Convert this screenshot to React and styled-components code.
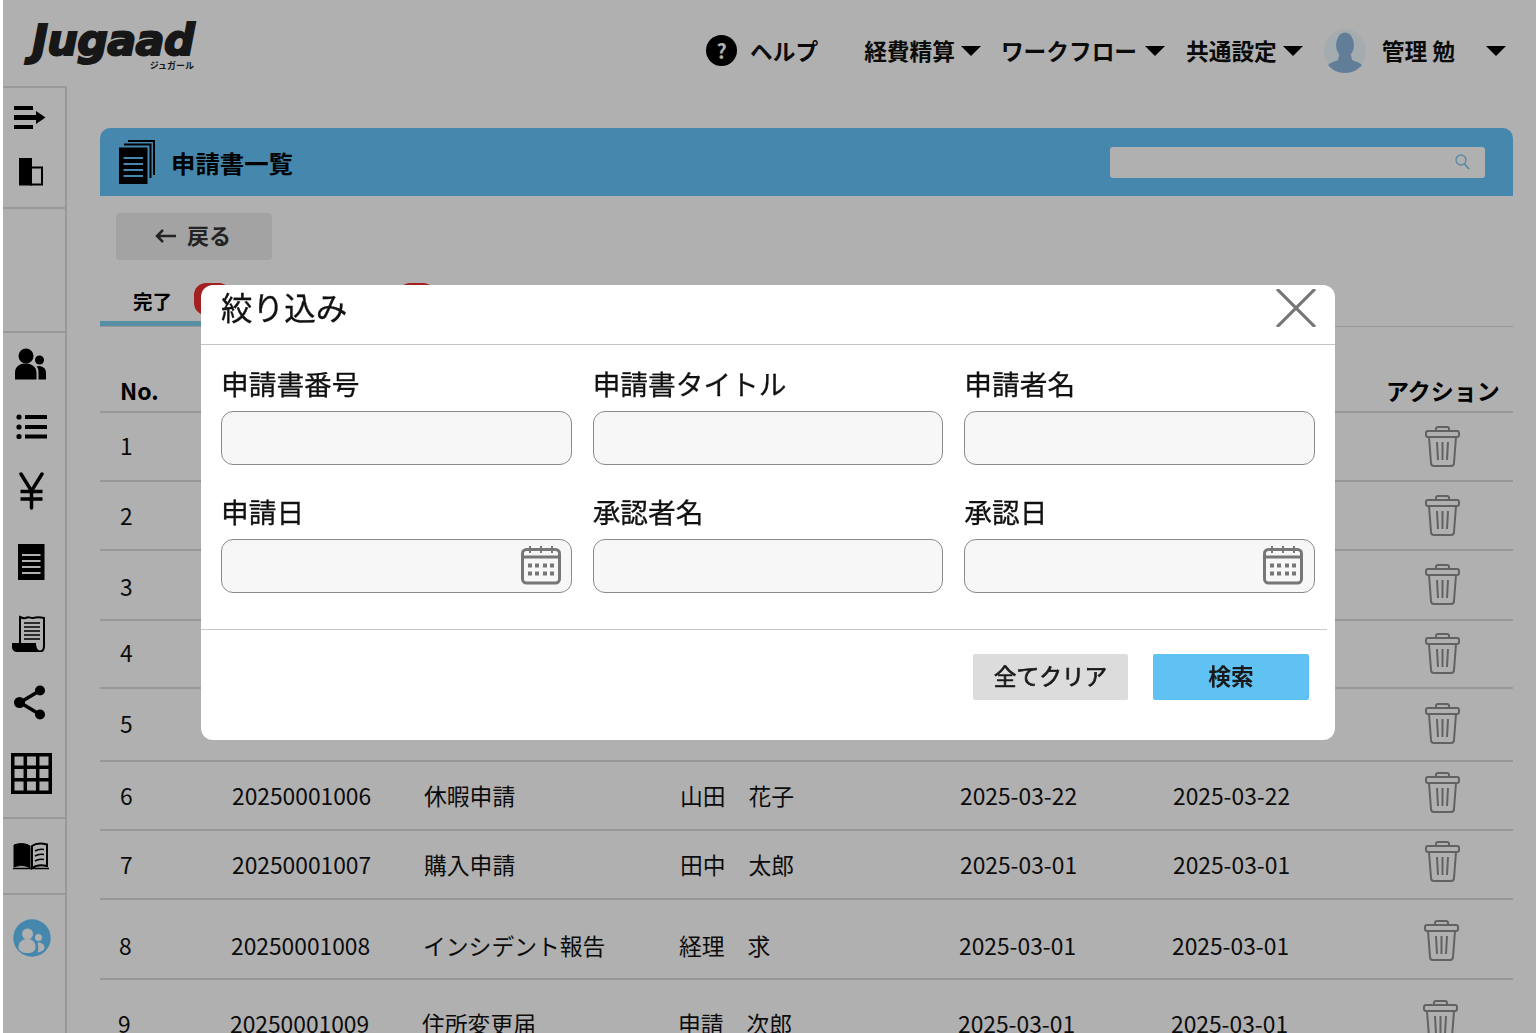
import React from 'react'
import styled, { createGlobalStyle } from 'styled-components'

const GlobalStyle = createGlobalStyle`
  html, body {
    margin: 0;
    padding: 0;
    background: #fff;
    font-family: "Noto Sans CJK JP", "Noto Sans", sans-serif;
    color: #000;
  }
  * { box-sizing: border-box; }
`

const Page = styled.div`
  height: 1033px;
  overflow: hidden;
  padding-left: 3px;
`
const TopBar = styled.header`
  height: 86px;
  display: flex;
  align-items: center;
  padding: 15px 30px 0 18px;
`
const Logo = styled.div`
  display: flex;
  flex-direction: column;
  align-items: flex-end;
  width: 173px;
  margin-top: -11px;
`
const LogoWord = styled.span`
  font-family: "DejaVu Sans", sans-serif;
  font-weight: 700;
  font-style: italic;
  font-size: 43px;
  line-height: 42px;
  letter-spacing: -0.7px;
  color: #222;
  -webkit-text-stroke: 2px #222;
  white-space: nowrap;
`
const LogoSub = styled.span`
  font-size: 9px;
  line-height: 10px;
  font-weight: 700;
  color: #222;
`
const Nav = styled.nav`
  margin-left: auto;
  display: flex;
  align-items: center;
  font-size: 22.7px;
  font-weight: 700;
  color: #111;
`
const NavItem = styled.div`
  display: flex;
  align-items: center;
  gap: ${p => p.$gap || 6}px;
  margin-right: ${p => p.$after || 0}px;
  white-space: nowrap;
`
const HelpDot = styled.span`
  width: 31px;
  height: 31px;
  border-radius: 50%;
  background: #000;
  color: #fff;
  display: flex;
  align-items: center;
  justify-content: center;
  font-size: 20px;
  font-weight: 700;
`
const Caret = styled.span`
  width: 0;
  height: 0;
  border-left: 10px solid transparent;
  border-right: 10px solid transparent;
  border-top: 10px solid #000;
`

const Body = styled.div`
  display: flex;
  height: 947px;
`
const Sidebar = styled.aside`
  width: 64px;
  flex: none;
  border-top: 2px solid #dedede;
  border-right: 2px solid #dcdcdc;
  display: flex;
  flex-direction: column;
`
const SideSection = styled.div`
  height: ${p => p.$h ? p.$h + 'px' : 'auto'};
  border-bottom: ${p => p.$last ? 'none' : '2px solid #dedede'};
  display: flex;
  flex-direction: column;
  align-items: center;
  padding-right: 6px;
`
const SideItem = styled.div`
  height: ${p => p.$h}px;
  width: 100%;
  display: flex;
  align-items: center;
  justify-content: center;
  padding-left: ${p => Math.max(p.$nudge || 0, 0) * 2}px;
  padding-right: ${p => Math.max(-(p.$nudge || 0), 0) * 2}px;
`

const Main = styled.main`
  flex: 1;
  padding: 42px 23px 0 33px;
  min-width: 0;
`
const CardHead = styled.div`
  height: 68px;
  background: #66c6fb;
  border-radius: 10px 10px 0 0;
  display: flex;
  align-items: center;
  padding: 0 28px 0 19px;
`
const CardTitle = styled.h1`
  margin: 2px 0 0 16px;
  font-size: 24.4px;
  font-weight: 700;
  line-height: 1;
`
const SearchBox = styled.div`
  margin-left: auto;
  width: 375px;
  height: 31px;
  background: #fff;
  border-radius: 3px;
  display: flex;
  align-items: center;
  justify-content: flex-end;
  padding-right: 15px;
`
const BackButton = styled.button`
  display: flex;
  align-items: center;
  justify-content: center;
  gap: 11px;
  width: 156px;
  height: 47px;
  margin: 17px 0 0 16px;
  padding: 0 0 5px;
  background: #ececec;
  border: 0;
  border-radius: 4px;
  font: 700 22px "Noto Sans CJK JP", sans-serif;
  color: #333;
`
const BackArrowSvg = styled.svg`
  margin: 4px 0 0 -2px;
`
const Tabs = styled.div`
  height: 67px;
  display: flex;
  align-items: stretch;
  border-bottom: 1px solid #dcdcdc;
`
const Tab = styled.div`
  width: ${p => p.$w}px;
  position: relative;
  padding: 16px 0 0 33px;
  font-size: 19.5px;
  font-weight: 700;
  line-height: 50px;
  border-bottom: ${p => p.$active ? '5px solid #7fd0ee' : '0'};
`
const Badge = styled.span`
  position: absolute;
  top: 23px;
  left: ${p => p.$left}px;
  width: 37px;
  height: 32px;
  border-radius: 12px;
  background: #ee2e2e;
`

const TableHead = styled.div`
  height: 86px;
  display: grid;
  grid-template-columns: 112px 192px 256px 280px 213px 213px 1fr;
  padding-left: 20px;
  align-items: end;
  padding-bottom: 4px;
  font-size: 23px;
  font-weight: 700;
  border-bottom: 2px solid #dcdcdc;
`
const HeadCell = styled.div`
  grid-column: ${p => p.$col};
  white-space: nowrap;
`
const Row = styled.div`
  height: ${p => p.$h}px;
  display: grid;
  grid-template-columns: 112px 192px 256px 280px 213px 213px 1fr;
  align-items: center;
  padding-left: ${p => 20 - p.$shift}px;
  border-bottom: 2px solid #dcdcdc;
  font-size: 22.8px;
  line-height: 30px;
  color: #111;
`
const Cell = styled.div`
  margin-top: ${p => p.$dy * 2 - 1}px;
  white-space: nowrap;
`
const TrashCell = styled.div`
  margin: ${p => p.$dy * 2 - 2}px 0 0 39px;
  height: 40px;
  line-height: 0;
`

const Backdrop = styled.div`
  position: fixed;
  top: 0;
  right: 0;
  bottom: 0;
  left: 3px;
  background: rgba(0, 0, 0, 0.31);
  padding: 285px 0 0 198px;
`
const Modal = styled.section`
  width: 1134px;
  height: 455px;
  background: #fff;
  border-radius: 12px;
`
const ModalHead = styled.div`
  height: 60px;
  padding: 0 19px 0 20px;
  display: flex;
  justify-content: space-between;
  align-items: flex-start;
  border-bottom: 1px solid #c4c4c4;
`
const ModalTitle = styled.h2`
  margin: 0;
  font-size: 31.6px;
  font-weight: 400;
  line-height: 42px;
  color: #111;
  -webkit-text-stroke: 0.3px #111;
`
const CloseButton = styled.button`
  margin-top: 4px;
  padding: 0;
  width: 40px;
  height: 38px;
  border: 0;
  background: none;
`
const Fields = styled.div`
  display: grid;
  grid-template-columns: repeat(3, 1fr);
  column-gap: 21px;
  row-gap: 28px;
  padding: 20px 20px 0;
`
const Field = styled.label`
  display: block;
`
const FieldLabel = styled.span`
  display: block;
  font-size: 27.7px;
  line-height: 36px;
  margin-bottom: 10px;
  color: #111;
  -webkit-text-stroke: 0.3px #111;
`
const InputWrap = styled.div`
  position: relative;
  height: 54px;
`
const Input = styled.input`
  display: block;
  width: 100%;
  height: 100%;
  background: #f7f7f7;
  border: 1px solid #8a8a8a;
  border-radius: 12px;
  outline: 0;
`
const CalendarSlot = styled.span`
  position: absolute;
  top: 6px;
  right: ${p => p.$right}px;
  line-height: 0;
`
const Divider = styled.hr`
  margin: 36px 8px 0 0;
  border: 0;
  border-top: 1px solid #c8c8c8;
`
const Actions = styled.div`
  display: flex;
  justify-content: flex-end;
  gap: 25px;
  padding: 24px 26px 0 0;
`
const ActionButton = styled.button`
  width: ${p => p.$primary ? 156 : 155}px;
  height: 46px;
  padding: 0 0 4px;
  border: 0;
  border-radius: 2px;
  font-family: "Noto Sans CJK JP", sans-serif;
  font-size: 22.7px;
  font-weight: ${p => p.$primary ? 700 : 400};
  -webkit-text-stroke: ${p => p.$primary ? 0 : 0.7}px #1a1a1a;
  color: #1a1a1a;
  background: ${p => p.$primary ? '#5fc2f3' : '#dcdcdc'};
`

/* sidebar + header drawings */
const MenuArrowIcon = () => (
  <svg width="32" height="25" viewBox="0 0 32 25">
    <path d="M0 1h19v4H0zM0 10h23v5H0zM0 20h19v4H0z" />
    <path d="M22 6l9.500 6.500L22 19z" />
  </svg>
)
const PanelIcon = () => (
  <svg width="24" height="28" viewBox="0 0 24 28">
    <rect x="0" y="0" width="13" height="27.500" />
    <rect x="12" y="9.500" width="11" height="17" fill="none" stroke="#000" strokeWidth="2" />
  </svg>
)
const UsersIcon = () => (
  <svg width="32" height="32" viewBox="0 0 32 32">
    <circle cx="11" cy="8" r="7.500" />
    <circle cx="24.500" cy="12" r="4.500" />
    <path d="M0 31.500V25C0 18 5 15.500 10.500 15.500S21.500 18 21.500 25v6.500z" />
    <path d="M23.500 18c4 0 7.500 2 7.500 7v6.500h-7.500V24c0-2.500-.7-4.500-2-5.500z" />
  </svg>
)
const ListIcon = () => (
  <svg width="31" height="26" viewBox="0 0 31 26">
    <circle cx="3" cy="3" r="2.600" /><circle cx="3" cy="13" r="2.600" /><circle cx="3" cy="22.500" r="2.600" />
    <path d="M9 1h22v4H9zM9 11h22v4H9zM9 20.500h22v4H9z" />
  </svg>
)
const YenIcon = () => (
  <svg width="25" height="38" viewBox="0 0 25 38" fill="none" stroke="#000" strokeWidth="3.500" strokeLinecap="round">
    <path d="M2 2l10.500 17L23 2" />
    <path d="M12.500 19v17" />
    <path d="M1.500 19.500h22M1.500 27h22" strokeLinecap="butt" />
  </svg>
)
const DocIcon = () => (
  <svg width="27" height="36" viewBox="0 0 27 36">
    <rect width="26.500" height="36" />
    <path d="M4 11h18.500M4 17h18.500M4 23h18.500M4 29h18.500" stroke="#fff" strokeWidth="2" />
  </svg>
)
const ScrollIcon = () => (
  <svg width="34" height="37" viewBox="0 0 34 37" fill="none" stroke="#000" strokeWidth="2">
    <path d="M8 29V2c3 1.500 5 1.500 7 .5s4 1 6 .5 5-1.500 11 0v28c0 3.500-2 5.500-4.500 5.500S23 35 23 29" />
    <path d="M12 8h16M12 12h16M12 16h16M12 20h16M12 24h16" strokeWidth="1.600" />
    <path d="M0.500 29h22.500c0 3 1 5.500 3 7H5c-3 0-4.500-2.500-4.500-7z" fill="#000" />
  </svg>
)
const ShareIcon = () => (
  <svg width="32" height="35" viewBox="0 0 32 35">
    <path d="M26 5.500L6 17.500l20 12" fill="none" stroke="#000" strokeWidth="3.500" />
    <circle cx="26" cy="5.500" r="5" /><circle cx="5.500" cy="17.500" r="5.500" /><circle cx="26" cy="29.500" r="5" />
  </svg>
)
const GridIcon = () => (
  <svg width="41" height="41" viewBox="0 0 41 41" fill="none" stroke="#000" strokeWidth="3.500">
    <rect x="1.750" y="1.750" width="37.500" height="37.500" />
    <path d="M14.300 2v37M26.700 2v37M2 14.300h37M2 26.700h37" />
  </svg>
)
const BookIcon = () => (
  <svg width="36" height="28" viewBox="0 0 36 28" fill="none" stroke="#000">
    <path d="M1 3c6-2 11-2 16 1v22c-5-3-10-3-16-1z" fill="#000" />
    <path d="M19 4c4-3 9-3 15-1.500V24c-6-1.500-11-1-15 2z" strokeWidth="2" />
    <path d="M22 9c3-2 6-2 9-1.500M22 14c3-2 6-2 9-1.500M22 19c3-2 6-2 9-1.500" strokeWidth="1.600" />
    <path d="M0 26.500h36" strokeWidth="1.500" />
  </svg>
)
const TeamBadgeIcon = () => (
  <svg width="38" height="38" viewBox="0 0 38 38">
    <circle cx="19" cy="19" r="18.700" fill="#66c6fb" />
    <circle cx="14.500" cy="15" r="5.500" fill="#fff" />
    <circle cx="25.500" cy="18.500" r="3.500" fill="#fff" />
    <path d="M5.500 28c0-5 4-8 9-8s8 3 8 8c0 4-3 6-8 6s-9-2-9-6z" fill="#fff" />
    <path d="M24.500 23.500c4 0 7 1.500 7 5 0 2.500-3 4.500-7 5 1-2 1-7 0-10z" fill="#fff" />
  </svg>
)
const StackIcon = () => (
  <svg width="36" height="44" viewBox="0 0 36 44" fill="none" stroke="#000" strokeWidth="2">
    <path d="M9 1h26v34" />
    <path d="M5 4.500h26.500V38" />
    <rect x="0" y="7.500" width="28.500" height="36.500" fill="#000" stroke="none" />
    <path d="M4.500 18h19.500M4.500 24h19.500M4.500 30h19.500M4.500 36h19.500" stroke="#66c6fb" />
  </svg>
)
const SearchIcon = () => (
  <svg width="15" height="16" viewBox="0 0 15 16" fill="none" stroke="#7fc8ea" strokeWidth="1.300">
    <circle cx="6" cy="6" r="5" />
    <path d="M9.500 10l4.500 5" strokeWidth="1.800" />
  </svg>
)
const BackArrow = () => (
  <BackArrowSvg width="21" height="14" viewBox="0 0 21 14" fill="none" stroke="#333" strokeWidth="2.500">
    <path d="M21 7H2M8 1L2 7l6 6" />
  </BackArrowSvg>
)
const Avatar = () => (
  <svg width="42" height="44" viewBox="0 0 42 44">
    <ellipse cx="21" cy="22" rx="21" ry="22" fill="#eefaff" />
    <ellipse cx="21" cy="16" rx="9" ry="12.500" fill="#8fb5dd" />
    <path d="M15 26h12l1 5c4 1.500 8 3 10 5-4 5-10 8-17 8S8 41 4 36c2-2 6-3.500 10-5z" fill="#8fb5dd" />
  </svg>
)
const TrashIcon = () => (
  <svg width="35" height="41" viewBox="0 0 35 41" fill="none" stroke="#8e8e8e" strokeWidth="2">
    <path d="M11 5V3c0-1 1-2 2-2h9c1 0 2 1 2 2v2" />
    <rect x="1" y="5" width="33" height="6" rx="2" />
    <path d="M4 11l2 26c0 2 1 3 3 3h17c2 0 3-1 3-3l2-26" />
    <path d="M12 16l1 18M17.500 16v18M23 16l-1 18" />
  </svg>
)
const CloseIcon = () => (
  <svg width="40" height="38" viewBox="0 0 40 38" stroke="#777" strokeWidth="3.200">
    <path d="M1 0l38 38M39 0L1 38" />
  </svg>
)
const CalendarIcon = () => (
  <svg width="40" height="40" viewBox="0 0 40 40" fill="none" stroke="#777" strokeWidth="3">
    <rect x="1.500" y="4.500" width="37" height="33.500" rx="4" />
    <path d="M2 12h36" />
    <path d="M9 1v7M20 1v7M31 1v7" strokeWidth="2" />
    <path d="M7 20.500h4M14 20.500h4M22 20.500h4M29 20.500h4M7 28.500h4M14 28.500h4M22 28.500h4M29 28.500h4" strokeWidth="4" />
  </svg>
)

const rows = [
  { no: 1, h: 69, text: 0, trash: 0, shift: 0 },
  { no: 2, h: 69, text: 1, trash: 0, shift: 0 },
  { no: 3, h: 70, text: 2, trash: 0, shift: 0 },
  { no: 4, h: 68, text: -1, trash: 0, shift: 0 },
  { no: 5, h: 73, text: 0, trash: -1, shift: 0 },
  { no: 6, id: '20250001006', kind: '休暇申請', who: '山田　花子', date: '2025-03-22', h: 69, text: 1, trash: -3, shift: 0 },
  { no: 7, id: '20250001007', kind: '購入申請', who: '田中　太郎', date: '2025-03-01', h: 69, text: 1, trash: -3, shift: 0 },
  { no: 8, id: '20250001008', kind: 'インシデント報告', who: '経理　求', date: '2025-03-01', h: 80, text: 7, trash: 2, shift: 1 },
  { no: 9, id: '20250001009', kind: '住所変更届', who: '申請　次郎', date: '2025-03-01', h: 90, text: 0, trash: -3, shift: 2 },
]

const fields = [
  { label: '申請書番号' },
  { label: '申請書タイトル' },
  { label: '申請者名' },
  { label: '申請日', calendar: 11 },
  { label: '承認者名' },
  { label: '承認日', calendar: 12 },
]

export default function App() {
  return (
    <>
      <GlobalStyle />
      <Page>
        <TopBar>
          <Logo>
            <LogoWord>Jugaad</LogoWord>
            <LogoSub>ジュガール</LogoSub>
          </Logo>
          <Nav>
            <NavItem $gap={13} $after={46}><HelpDot>?</HelpDot>ヘルプ</NavItem>
            <NavItem $after={20}>経費精算<Caret /></NavItem>
            <NavItem $gap={8} $after={21}>ワークフロー<Caret /></NavItem>
            <NavItem $after={21}>共通設定<Caret /></NavItem>
            <NavItem $gap={16} $after={31}><Avatar />管理 勉</NavItem>
            <Caret />
          </Nav>
        </TopBar>
        <Body>
          <Sidebar>
            <SideSection $h={121}>
              <SideItem $h={58} $nudge={-1}><MenuArrowIcon /></SideItem>
              <SideItem $h={52}><PanelIcon /></SideItem>
            </SideSection>
            <SideSection $h={124} />
            <SideSection $h={486}>
              <SideItem $h={62}><UsersIcon /></SideItem>
              <SideItem $h={64}><ListIcon /></SideItem>
              <SideItem $h={64}><YenIcon /></SideItem>
              <SideItem $h={78}><DocIcon /></SideItem>
              <SideItem $h={64} $nudge={-2}><ScrollIcon /></SideItem>
              <SideItem $h={74} $nudge={-1}><ShareIcon /></SideItem>
              <SideItem $h={68}><GridIcon /></SideItem>
            </SideSection>
            <SideSection $h={76}>
              <SideItem $h={74}><BookIcon /></SideItem>
            </SideSection>
            <SideSection $last>
              <SideItem $h={86} $nudge={1}><TeamBadgeIcon /></SideItem>
            </SideSection>
          </Sidebar>
          <Main>
            <CardHead>
              <StackIcon />
              <CardTitle>申請書一覧</CardTitle>
              <SearchBox><SearchIcon /></SearchBox>
            </CardHead>
            <BackButton><BackArrow />戻る</BackButton>
            <Tabs>
              <Tab $w={132} $active>完了<Badge $left={94} /></Tab>
              <Tab $w={204}><Badge $left={166} /></Tab>
            </Tabs>
            <TableHead>
              <HeadCell $col={1}>No.</HeadCell>
              <HeadCell $col={7}>アクション</HeadCell>
            </TableHead>
            {rows.map(r => (
              <Row key={r.no} $h={r.h} $shift={r.shift}>
                <Cell $dy={r.text}>{r.no}</Cell>
                <Cell $dy={r.text}>{r.id}</Cell>
                <Cell $dy={r.text}>{r.kind}</Cell>
                <Cell $dy={r.text}>{r.who}</Cell>
                <Cell $dy={r.text}>{r.date}</Cell>
                <Cell $dy={r.text}>{r.date}</Cell>
                <TrashCell $dy={r.trash}><TrashIcon /></TrashCell>
              </Row>
            ))}
          </Main>
        </Body>
      </Page>
      <Backdrop>
        <Modal>
          <ModalHead>
            <ModalTitle>絞り込み</ModalTitle>
            <CloseButton aria-label="閉じる"><CloseIcon /></CloseButton>
          </ModalHead>
          <Fields>
            {fields.map(f => (
              <Field key={f.label}>
                <FieldLabel>{f.label}</FieldLabel>
                <InputWrap>
                  <Input />
                  {f.calendar && <CalendarSlot $right={f.calendar}><CalendarIcon /></CalendarSlot>}
                </InputWrap>
              </Field>
            ))}
          </Fields>
          <Divider />
          <Actions>
            <ActionButton>全てクリア</ActionButton>
            <ActionButton $primary>検索</ActionButton>
          </Actions>
        </Modal>
      </Backdrop>
    </>
  )
}
